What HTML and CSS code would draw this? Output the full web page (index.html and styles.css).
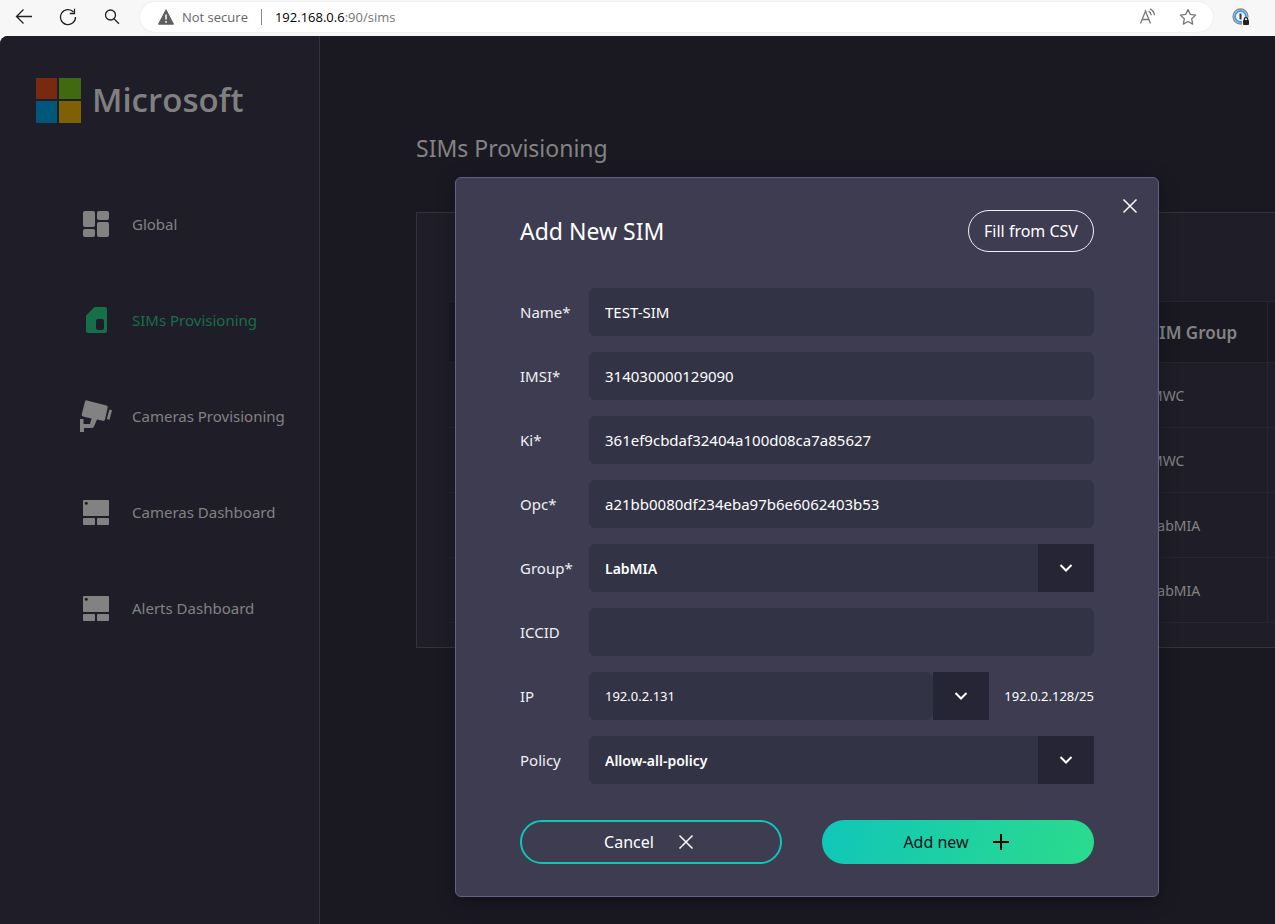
FILE: index.html
```html
<!DOCTYPE html>
<html lang="en">
<head>
<meta charset="utf-8">
<title>SIMs Provisioning</title>
<link rel="stylesheet" href="styles.css">
</head>
<body>
<header class="browser">
  <button class="tool" aria-label="Back"><svg width="18" height="18" viewBox="0 0 18 18"><path d="M17 8.500H1.500M8.500 1.500l-7 7 7 7"/></svg></button>
  <button class="tool" aria-label="Reload"><svg width="18" height="18" viewBox="0 0 18 18"><path d="M16.500 9A7.500 7.500 0 1 1 14.500 4M15.500 .8v4.700h-4.700"/></svg></button>
  <button class="tool" aria-label="Search"><svg width="18" height="18" viewBox="0 0 18 18"><circle cx="7.500" cy="7" r="5"/><path d="M11 10.700l5 5"/></svg></button>
  <div class="address">
    <svg class="warning" width="16" height="16" viewBox="0 0 16 16"><path d="M8 .7 15.500 15.200H.5Z" fill="#5f5f5f" stroke="#5f5f5f" stroke-linejoin="round"/><path d="M8 5.500v5M8 12v1.700" stroke="#fff" stroke-width="1.500"/></svg>
    <span class="security">Not secure</span>
    <span class="url"><b>192.168.0.6</b>:90/sims</span>
    <button class="tool small" aria-label="Read aloud"><svg width="18" height="18" viewBox="0 0 18 18"><path d="M1.500 15.500 6.500 3l5 12.500M3.200 11.500h6.600M9.500 3.200q2.500 1.200 2.800 4M11 .8q4 2 4.500 6.500"/></svg></button>
    <button class="tool small" aria-label="Add to favourites"><svg width="18" height="18" viewBox="0 0 18 18"><path stroke-linejoin="round" d="M9 1.500l2.300 4.900 5.300.7-3.900 3.700 1 5.300L9 13.500l-4.700 2.600 1-5.300L1.400 7.100l5.300-.7Z"/></svg></button>
  </div>
  <button class="tool" aria-label="Password manager"><svg width="18" height="18" viewBox="0 0 18 18"><circle cx="8.500" cy="8.500" r="7.500" stroke="#888"/><circle cx="8.500" cy="8.500" r="5.500" stroke="#3f9bf5" stroke-width="2"/><path d="M8.500 5.500v6" stroke="#333" stroke-width="2"/><path d="M10 9.500H18V18H10Z" fill="#f7f7f7" stroke="none"/><rect x="11" y="12" width="6" height="5" rx="1" fill="#222" stroke="none"/><path d="M12.300 12.500V11q0-1.300 1.700-1.300t1.700 1.300v1.500" stroke="#222"/></svg></button>
</header>
<div class="app">
  <aside class="sidebar">
    <div class="logo">
      <svg width="45" height="45" viewBox="0 0 45 45"><path fill="#78290f" d="M0 0h21v21H0z"/><path fill="#406a12" d="M23 0h22v21H23z"/><path fill="#005779" d="M0 23h21v22H0z"/><path fill="#806005" d="M23 23h22v22H23z"/></svg>
      <span>Microsoft</span>
    </div>
    <nav class="nav">
      <a href="#"><svg width="32" height="32" viewBox="0 0 32 32"><rect x="3" y="3" width="12" height="16" rx="2"/><rect x="17" y="3" width="12" height="9" rx="2"/><rect x="3" y="21" width="12" height="8" rx="2"/><rect x="17" y="14" width="12" height="15" rx="2"/></svg>Global</a>
      <a href="#" class="active"><svg width="32" height="32" viewBox="0 0 32 32"><path fill-rule="evenodd" d="M14.500 3H25q2 0 2 2v22q0 2-2 2H8q-2 0-2-2V11.500ZM18 15q-2 0-2 2v7q0 2 2 2h4q2 0 2-2v-7q0-2-2-2Z"/></svg>SIMs Provisioning</a>
      <a href="#"><svg width="32" height="32" viewBox="0 0 32 32"><path d="M7 .4 26.500 5.500q1.500.5 1.200 2L25 19.500q-.5 1.700-2 1.300L17 19.500l-3 7q-.7 1.500-2.200 1.500H4v4H0V19h3.500v5H10l1.500-5.500L3 16.500q-1.600-.5-1.300-2L5 1.600Q5.500 0 7 .4ZM29.500 9.500l2.500.7-2.500 9.500-2.700-.7Z"/></svg>Cameras Provisioning</a>
      <a href="#"><svg width="32" height="32" viewBox="0 0 32 32"><rect x="3" y="4" width="26" height="16" rx="1"/><rect x="3" y="22" width="12" height="7" rx="1"/><rect x="17" y="22" width="12" height="7" rx="1"/><circle cx="6.300" cy="7.200" r="1.500" fill="#1f1e28"/></svg>Cameras Dashboard</a>
      <a href="#"><svg width="32" height="32" viewBox="0 0 32 32"><rect x="3" y="4" width="26" height="16" rx="1"/><rect x="3" y="22" width="12" height="7" rx="1"/><rect x="17" y="22" width="12" height="7" rx="1"/><circle cx="6.300" cy="7.200" r="1.500" fill="#1f1e28"/></svg>Alerts Dashboard</a>
    </nav>
  </aside>
  <main class="content">
    <h1>SIMs Provisioning</h1>
    <section class="card">
      <table>
        <colgroup><col class="wide"><col class="group"><col></colgroup>
        <thead><tr><th></th><th>SIM Group</th><th></th></tr></thead>
        <tbody>
          <tr><td></td><td>MWC</td><td></td></tr>
          <tr><td></td><td>MWC</td><td></td></tr>
          <tr><td></td><td>LabMIA</td><td></td></tr>
          <tr><td></td><td>LabMIA</td><td></td></tr>
        </tbody>
      </table>
    </section>
    <div class="overlay">
      <form class="modal" role="dialog" aria-labelledby="dialog-title">
        <button type="button" class="close" aria-label="Close"><svg width="16" height="16" viewBox="0 0 16 16"><path d="M1.500 1.500l13 13M14.500 1.500l-13 13"/></svg></button>
        <div class="modal-head">
          <h2 id="dialog-title">Add New SIM</h2>
          <button type="button" class="outline">Fill from CSV</button>
        </div>
        <div class="fields">
          <label for="name">Name*</label>
          <input id="name" type="text" value="TEST-SIM">
          <label for="imsi">IMSI*</label>
          <input id="imsi" type="text" value="314030000129090">
          <label for="ki">Ki*</label>
          <input id="ki" type="text" value="361ef9cbdaf32404a100d08ca7a85627">
          <label for="opc">Opc*</label>
          <input id="opc" type="text" value="a21bb0080df234eba97b6e6062403b53">
          <label for="group">Group*</label>
          <div class="select">
            <select id="group"><option>LabMIA</option></select>
            <span class="arrow"><svg width="14" height="8" viewBox="0 0 14 8"><path d="M1.500 1l5.500 5.500L12.500 1"/></svg></span>
          </div>
          <label for="iccid">ICCID</label>
          <input id="iccid" type="text">
          <label for="ip">IP</label>
          <div class="ip-row">
            <div class="select light">
              <select id="ip"><option>192.0.2.131</option></select>
              <span class="arrow"><svg width="14" height="8" viewBox="0 0 14 8"><path d="M1.500 1l5.500 5.500L12.500 1"/></svg></span>
            </div>
            <span>192.0.2.128/25</span>
          </div>
          <label for="policy">Policy</label>
          <div class="select">
            <select id="policy"><option>Allow-all-policy</option></select>
            <span class="arrow"><svg width="14" height="8" viewBox="0 0 14 8"><path d="M1.500 1l5.500 5.500L12.500 1"/></svg></span>
          </div>
        </div>
        <div class="actions">
          <button type="button" class="cancel">Cancel<svg width="24" height="24" viewBox="0 0 24 24"><path d="M5.500 5.500l13 13M18.500 5.500l-13 13"/></svg></button>
          <button type="submit" class="add">Add new<svg width="24" height="24" viewBox="0 0 24 24"><path d="M12 4v16M4 12h16"/></svg></button>
        </div>
      </form>
    </div>
  </main>
</div>
</body>
</html>
```

FILE: styles.css
```css
* { box-sizing: border-box; }

body {
  margin: 0;
  min-height: 100vh;
  display: flex;
  flex-direction: column;
  background: #f7f7f7;
  font-family: "Noto Sans", "Open Sans", sans-serif;
  font-size: 15px;
}

button, input, select { font: inherit; }
button { padding: 0; border: 0; background: none; cursor: pointer; }
h1, h2 { margin: 0; font-weight: 400; }

/* Browser toolbar */
.browser {
  display: flex;
  align-items: center;
  height: 36px;
  padding: 0 19px 2px 2px;
  font-family: "Open Sans", sans-serif;
  font-size: 13px;
}
.tool {
  display: grid;
  place-items: center;
  width: 44px;
  height: 30px;
  flex: none;
}
.tool.small { width: 40px; }
.tool svg { fill: none; stroke: #222; stroke-width: 1.300; }
.tool.small svg { stroke: #777; }
.address {
  flex: 1;
  display: flex;
  align-items: center;
  height: 30px;
  margin: 0 13px 0 6px;
  padding: 0 5px 0 18px;
  border-radius: 15px;
  background: #fff;
  box-shadow: 0 0 2px #dfdfe4;
}
.browser > .tool:last-child { width: 30px; }
.warning { margin-right: 8px; fill: none; }
.security {
  padding-right: 13px;
  border-right: 1px solid #888;
  line-height: 16px;
  color: #666;
}
.url { flex: 1; padding-left: 13px; color: #757575; }
.url b { font-weight: 400; color: #000; }

/* Page */
.app {
  flex: 1;
  display: grid;
  grid-template-columns: 320px minmax(0, 1fr);
  border-top-left-radius: 8px;
  background: #1a1922;
  color: #838383;
  overflow: hidden;
}
.sidebar {
  padding: 42px 0 0 36px;
  border-right: 1px solid #34323f;
  background: #1f1e28;
}
.logo { display: flex; align-items: center; gap: 11px; height: 44px; }
.logo span {
  font-family: "Open Sans", sans-serif;
  font-size: 33px;
  font-weight: 600;
  line-height: 44px;
  color: #808080;
}
.nav {
  display: flex;
  flex-direction: column;
  gap: 64px;
  margin-top: 86px;
  padding-left: 44px;
}
.nav a {
  display: flex;
  align-items: center;
  gap: 20px;
  height: 32px;
  color: #828282;
  text-decoration: none;
  white-space: nowrap;
}
.nav svg { flex: none; fill: currentColor; }
.nav .active { color: #176f4a; }

.content { position: relative; padding: 96px 0 0 96px; overflow: hidden; }
h1 { margin-bottom: 48px; font-size: 23px; line-height: 32px; }
.card {
  width: 1000px;
  padding: 88px 32px 24px;
  border: 1px solid #34323f;
  background: #1f1e28;
}
table { width: 100%; table-layout: fixed; border-spacing: 0; }
.wide { width: 683px; }
.group { width: 136px; }
th, td {
  padding: 0 0 0 18px;
  border: solid #262530;
  border-width: 0 1px 1px 0;
  text-align: left;
  white-space: nowrap;
}
th {
  height: 62px;
  border-top-width: 1px;
  background: #1a1922;
  font-size: 17px;
  font-weight: 600;
}
td { height: 65px; font-size: 14px; }

/* Dialog */
.overlay {
  position: absolute;
  inset: 0;
  display: flex;
  justify-content: center;
  align-items: flex-start;
  padding: 141px 0 27px 19px;
}
.modal {
  position: relative;
  width: 704px;
  padding: 32px 64px;
  border: 1px solid #62608a;
  border-radius: 6px;
  background: #3d3c51;
  color: #f0f0f4;
  box-shadow: 0 4px 20px rgba(0, 0, 0, 0.3);
}
.close {
  position: absolute;
  top: 12px;
  right: 12px;
  display: grid;
  place-items: center;
  width: 32px;
  height: 32px;
}
.modal svg { fill: none; stroke: #fff; stroke-width: 1.500; }
.modal-head {
  display: flex;
  align-items: center;
  justify-content: space-between;
  margin-bottom: 36px;
}
h2 { font-size: 23px; color: #fff; }
.outline {
  width: 126px;
  height: 42px;
  border: 1px solid #f0f0f4;
  border-radius: 21px;
  font-size: 16px;
  color: #fff;
}
.fields {
  display: grid;
  grid-template-columns: 53px minmax(0, 1fr);
  align-items: center;
  gap: 16px;
}
.fields label { white-space: nowrap; }
.fields input, .fields select {
  width: 100%;
  height: 48px;
  padding: 0 16px;
  border: 0;
  border-radius: 6px;
  background: #333346;
  color: #fff;
}
.select { display: flex; height: 48px; flex: 1; }
.fields select {
  appearance: none;
  flex: 1;
  width: auto;
  border-radius: 6px 0 0 6px;
  font-size: 14px;
  font-weight: 600;
}
.fields .light select { border-radius: 6px; font-size: 13px; font-weight: 400; }
.arrow {
  display: grid;
  place-items: center;
  width: 56px;
  background: #262535;
}
.modal .arrow svg { stroke-width: 2; }
.ip-row { display: flex; align-items: center; gap: 15px; font-size: 13px; color: #fff; }
.actions {
  display: grid;
  grid-template-columns: 262fr 272fr;
  gap: 40px;
  margin-top: 36px;
}
.actions button {
  display: flex;
  align-items: center;
  justify-content: center;
  gap: 20px;
  height: 44px;
  border-radius: 22px;
  font-size: 16px;
}
.actions .cancel { border: 2px solid #10c6b9; color: #fff; }
.actions .add { background: linear-gradient(105deg, #10c6b9, #2bdb8c); color: #101018; }
.modal .add svg { stroke: #000; stroke-width: 2; }
```
